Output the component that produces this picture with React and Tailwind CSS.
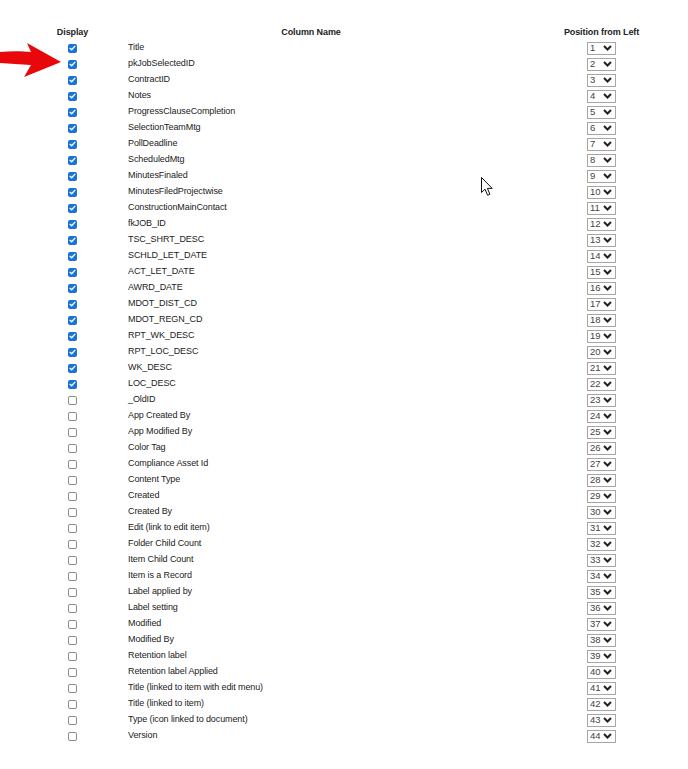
// Column display / ordering settings list
const columns = [
  ["Title", true],
  ["pkJobSelectedID", true],
  ["ContractID", true],
  ["Notes", true],
  ["ProgressClauseCompletion", true],
  ["SelectionTeamMtg", true],
  ["PollDeadline", true],
  ["ScheduledMtg", true],
  ["MinutesFinaled", true],
  ["MinutesFiledProjectwise", true],
  ["ConstructionMainContact", true],
  ["fkJOB_ID", true],
  ["TSC_SHRT_DESC", true],
  ["SCHLD_LET_DATE", true],
  ["ACT_LET_DATE", true],
  ["AWRD_DATE", true],
  ["MDOT_DIST_CD", true],
  ["MDOT_REGN_CD", true],
  ["RPT_WK_DESC", true],
  ["RPT_LOC_DESC", true],
  ["WK_DESC", true],
  ["LOC_DESC", true],
  ["_OldID", false],
  ["App Created By", false],
  ["App Modified By", false],
  ["Color Tag", false],
  ["Compliance Asset Id", false],
  ["Content Type", false],
  ["Created", false],
  ["Created By", false],
  ["Edit (link to edit item)", false],
  ["Folder Child Count", false],
  ["Item Child Count", false],
  ["Item is a Record", false],
  ["Label applied by", false],
  ["Label setting", false],
  ["Modified", false],
  ["Modified By", false],
  ["Retention label", false],
  ["Retention label Applied", false],
  ["Title (linked to item with edit menu)", false],
  ["Title (linked to item)", false],
  ["Type (icon linked to document)", false],
  ["Version", false],
];

function Check({ checked }) {
  if (checked) {
    return (
      <span className="flex items-center justify-center w-[9px] h-[9px] rounded-[2px] bg-[#1a73d9]">
        <svg width="7" height="6" viewBox="0 0 7 6">
          <path d="M0.8 3 L2.7 4.8 L6.2 0.9" fill="none" stroke="#fff" strokeWidth="1.4" />
        </svg>
      </span>
    );
  }
  return <span className="block w-[9px] h-[9px] rounded-[2px] border border-[#8a8a8a] bg-white"></span>;
}

function PositionSelect({ value }) {
  return (
    <div className="flex items-center justify-between w-[29px] h-[13px] border border-[#a6a6a6] bg-white pl-[2px] pr-[3px]">
      <span className="text-[9.5px] leading-none text-[#444]">{value}</span>
      <svg width="9" height="6" viewBox="0 0 9 6">
        <path d="M1 1 L4.5 4.5 L8 1" fill="none" stroke="#222" strokeWidth="2" />
      </svg>
    </div>
  );
}

export default function App() {
  return (
    <div className="relative w-[688px] min-h-[769px] bg-white pt-[25px] pl-[17px] text-[9px] tracking-[-0.1px] text-[#222]" style={{ fontFamily: '"Liberation Sans", Arial, sans-serif' }}>
      <div className="grid grid-cols-[111px_366px_194px]">
        <div className="h-[15px] flex items-center justify-center font-bold text-[#222]">Display</div>
        <div className="h-[15px] flex items-center justify-center font-bold text-[#222]">Column Name</div>
        <div className="h-[15px] flex items-center justify-center pl-[21px] font-bold text-[#222]">Position from Left</div>

        {columns.map(([name, on], i) => (
          <div key={name} className="contents">
            <div className="h-4 flex items-center justify-center">
              <Check checked={on} />
            </div>
            <div className="h-4 flex items-center">{name}</div>
            <div className="h-4 flex items-center justify-center pl-[21px]">
              <PositionSelect value={i + 1} />
            </div>
          </div>
        ))}
      </div>

      {/* red annotation arrow */}
      <svg className="absolute left-0 top-[40px]" width="64" height="40" viewBox="0 0 64 40">
        <path d="M0 12 C10 11 22 11 31 12 L27 3 L61 22 L24 37 L31 25 C20 24 10 24 0 23 Z" fill="#e8070b" />
      </svg>

      {/* mouse pointer */}
      <svg className="absolute left-[481px] top-[177px]" width="13" height="20" viewBox="0 0 13 20">
        <path d="M0.5 0.5 L0.5 15.5 L4 12.2 L6.6 18.3 L8.9 17.3 L6.4 11.4 L11.2 11.4 Z" fill="#fff" stroke="#111" strokeWidth="1" strokeLinejoin="round" />
      </svg>
    </div>
  );
}
